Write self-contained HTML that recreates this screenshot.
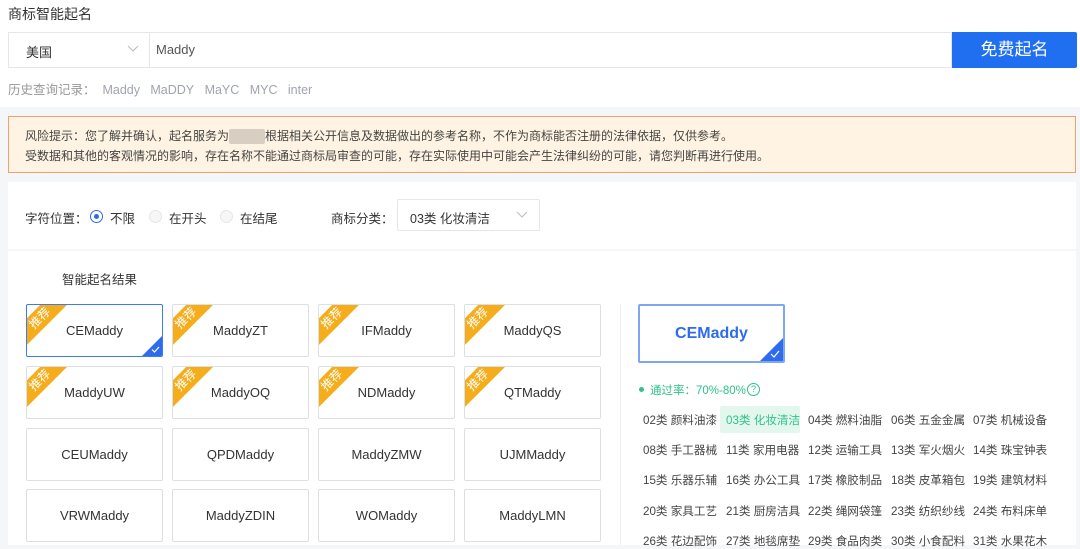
<!DOCTYPE html>
<html><head><meta charset="utf-8"><style>
*{margin:0;padding:0;box-sizing:border-box}
body{width:1080px;height:545px;overflow:hidden;background:#f5f6f8;font-family:"Liberation Sans","Noto Sans CJK SC",sans-serif;position:relative;color:#333}
.a{position:absolute}
.top{left:0;top:0;width:1080px;height:107px;background:#fff}
.card{position:absolute;width:137px;height:53px;border:1px solid #dcdfe6;border-radius:2px;background:#fff;font-size:13px;color:#333;display:flex;align-items:center;justify-content:center;overflow:hidden}
.card.sel{border-color:#3b7cf0}
.tag{position:absolute;width:84px;height:19px;background:#f6ad1c;color:#fff;font-size:12px;line-height:19px;text-align:center;transform:rotate(-45deg);left:-29px;top:4px}
.chk{position:absolute;right:0;bottom:0;width:0;height:0;border-left:20px solid transparent;border-bottom:20px solid #2f6bef}
.cat{position:absolute;font-size:11.6px;color:#444;white-space:nowrap}
</style></head><body>
<div class="a top"></div>
<div class="a" style="left:8px;top:4px;font-size:14px;color:#333">商标智能起名</div>
<div class="a" style="left:8px;top:32px;width:944px;height:36px;border:1px solid #e4e6eb;background:#fff"></div>
<div class="a" style="left:149px;top:33px;width:1px;height:34px;background:#e4e6eb"></div>
<div class="a" style="left:26px;top:42px;font-size:13px;color:#333">美国</div>
<svg class="a" style="left:127px;top:45px" width="12" height="8"><path d="M1 1l5 5 5-5" fill="none" stroke="#bbb" stroke-width="1"/></svg>
<div class="a" style="left:156px;top:42px;font-size:13px;color:#555">Maddy</div>
<div class="a" style="left:952px;top:32px;width:125px;height:36px;background:#1f6ff0;color:#fff;font-size:17px;line-height:36px;text-align:center;border-radius:0 2px 2px 0">免费起名</div>
<div class="a" style="left:8px;top:79px;font-size:12.5px;color:#999;white-space:nowrap">历史查询记录：&nbsp;&nbsp;<span style="color:#a0a4ad">Maddy&nbsp;&nbsp; MaDDY&nbsp;&nbsp; MaYC&nbsp;&nbsp; MYC&nbsp;&nbsp; inter</span></div>

<div class="a" style="left:8px;top:116px;width:1068px;height:57px;background:#fff4e3;border:1px solid #f2a070"></div>
<div class="a" style="left:25px;top:126px;font-size:12px;color:#444;line-height:20px;white-space:nowrap">风险提示：您了解并确认，起名服务为<span style="display:inline-block;width:36px;height:15px;background:#d8cfc2;vertical-align:middle;border-radius:2px"></span>根据相关公开信息及数据做出的参考名称，不作为商标能否注册的法律依据，仅供参考。<br>受数据和其他的客观情况的影响，存在名称不能通过商标局审查的可能，存在实际使用中可能会产生法律纠纷的可能，请您判断再进行使用。</div>

<div class="a" style="left:8px;top:182px;width:1068px;height:67px;background:#fff"></div>
<div class="a" style="left:8px;top:251px;width:1068px;height:294px;background:#fff"></div>
<div class="a" style="left:25px;top:208px;font-size:12.5px;color:#333;white-space:nowrap">字符位置：</div>
<div class="a" style="left:90px;top:210px;width:13px;height:13px;border:1px solid #2f6bef;border-radius:50%"></div>
<div class="a" style="left:94px;top:214px;width:5px;height:5px;background:#2f6bef;border-radius:50%"></div>
<div class="a" style="left:110px;top:208px;font-size:12.5px">不限</div>
<div class="a" style="left:149px;top:210px;width:13px;height:13px;border:1px solid #e6e6e6;border-radius:50%;background:#f6f6f6"></div>
<div class="a" style="left:169px;top:208px;font-size:12.5px">在开头</div>
<div class="a" style="left:220px;top:210px;width:13px;height:13px;border:1px solid #e6e6e6;border-radius:50%;background:#f6f6f6"></div>
<div class="a" style="left:240px;top:208px;font-size:12.5px">在结尾</div>
<div class="a" style="left:331px;top:208px;font-size:12.5px">商标分类：</div>
<div class="a" style="left:397px;top:199px;width:143px;height:32px;border:1px solid #e4e6eb;border-radius:2px"></div>
<div class="a" style="left:410px;top:208px;font-size:12.5px">03类 化妆清洁</div>
<svg class="a" style="left:516px;top:211px" width="12" height="8"><path d="M1 1l5 5 5-5" fill="none" stroke="#bbb" stroke-width="1"/></svg>
<div class="a" style="left:62px;top:269px;font-size:12.5px">智能起名结果</div>

<div class="card sel" style="left:26px;top:304px"><div class="tag">推荐</div>CEMaddy<div class="chk"></div><svg class="a" style="right:2px;bottom:3px" width="9" height="7"><path d="M1 3.5l2.5 2.5 4.5-5" fill="none" stroke="#fff" stroke-width="1.2"/></svg></div>
<div class="card" style="left:172px;top:304px"><div class="tag">推荐</div>MaddyZT</div>
<div class="card" style="left:318px;top:304px"><div class="tag">推荐</div>IFMaddy</div>
<div class="card" style="left:464px;top:304px"><div class="tag">推荐</div>MaddyQS</div>
<div class="card" style="left:26px;top:366px"><div class="tag">推荐</div>MaddyUW</div>
<div class="card" style="left:172px;top:366px"><div class="tag">推荐</div>MaddyOQ</div>
<div class="card" style="left:318px;top:366px"><div class="tag">推荐</div>NDMaddy</div>
<div class="card" style="left:464px;top:366px"><div class="tag">推荐</div>QTMaddy</div>
<div class="card" style="left:26px;top:428px">CEUMaddy</div>
<div class="card" style="left:172px;top:428px">QPDMaddy</div>
<div class="card" style="left:318px;top:428px">MaddyZMW</div>
<div class="card" style="left:464px;top:428px">UJMMaddy</div>
<div class="card" style="left:26px;top:489px">VRWMaddy</div>
<div class="card" style="left:172px;top:489px">MaddyZDIN</div>
<div class="card" style="left:318px;top:489px">WOMaddy</div>
<div class="card" style="left:464px;top:489px">MaddyLMN</div>

<div class="a" style="left:620px;top:304px;width:1px;height:241px;background:#eceef2"></div>
<div class="card sel" style="left:638px;top:304px;width:147px;height:59px;border-width:2px;border-color:#7fa6f3;font-size:16px;font-weight:bold;color:#2f6bef">CEMaddy<div class="chk" style="border-left-width:23px;border-bottom-width:23px"></div><svg class="a" style="right:3px;bottom:3px" width="10" height="8"><path d="M1 4l3 3 5-6" fill="none" stroke="#fff" stroke-width="1.2"/></svg></div>
<div class="a" style="left:639px;top:387px;width:5px;height:5px;border-radius:50%;background:#2fc28a"></div>
<div class="a" style="left:650px;top:382px;font-size:11.5px;color:#2fc28a">通过率：70%-80%</div>
<div class="a" style="left:747px;top:383px;width:13px;height:13px;border:1.2px solid #2fc28a;border-radius:50%;font-size:9px;color:#2fc28a;text-align:center;line-height:11px">?</div>
<div class="a" style="left:720px;top:406px;width:80px;height:27px;background:#e3f7ee;border-radius:2px"></div>
<div class="cat" style="left:643px;top:412px">02类 颜料油漆</div><div class="cat" style="left:726px;top:412px;color:#2fc28a">03类 化妆清洁</div><div class="cat" style="left:808px;top:412px">04类 燃料油脂</div><div class="cat" style="left:891px;top:412px">06类 五金金属</div><div class="cat" style="left:973px;top:412px">07类 机械设备</div>
<div class="cat" style="left:643px;top:442px">08类 手工器械</div><div class="cat" style="left:726px;top:442px">11类 家用电器</div><div class="cat" style="left:808px;top:442px">12类 运输工具</div><div class="cat" style="left:891px;top:442px">13类 军火烟火</div><div class="cat" style="left:973px;top:442px">14类 珠宝钟表</div>
<div class="cat" style="left:643px;top:472px">15类 乐器乐辅</div><div class="cat" style="left:726px;top:472px">16类 办公工具</div><div class="cat" style="left:808px;top:472px">17类 橡胶制品</div><div class="cat" style="left:891px;top:472px">18类 皮革箱包</div><div class="cat" style="left:973px;top:472px">19类 建筑材料</div>
<div class="cat" style="left:643px;top:503px">20类 家具工艺</div><div class="cat" style="left:726px;top:503px">21类 厨房洁具</div><div class="cat" style="left:808px;top:503px">22类 绳网袋篷</div><div class="cat" style="left:891px;top:503px">23类 纺织纱线</div><div class="cat" style="left:973px;top:503px">24类 布料床单</div>
<div class="cat" style="left:643px;top:533px">26类 花边配饰</div><div class="cat" style="left:726px;top:533px">27类 地毯席垫</div><div class="cat" style="left:808px;top:533px">29类 食品肉类</div><div class="cat" style="left:891px;top:533px">30类 小食配料</div><div class="cat" style="left:973px;top:533px">31类 水果花木</div>
</body></html>
